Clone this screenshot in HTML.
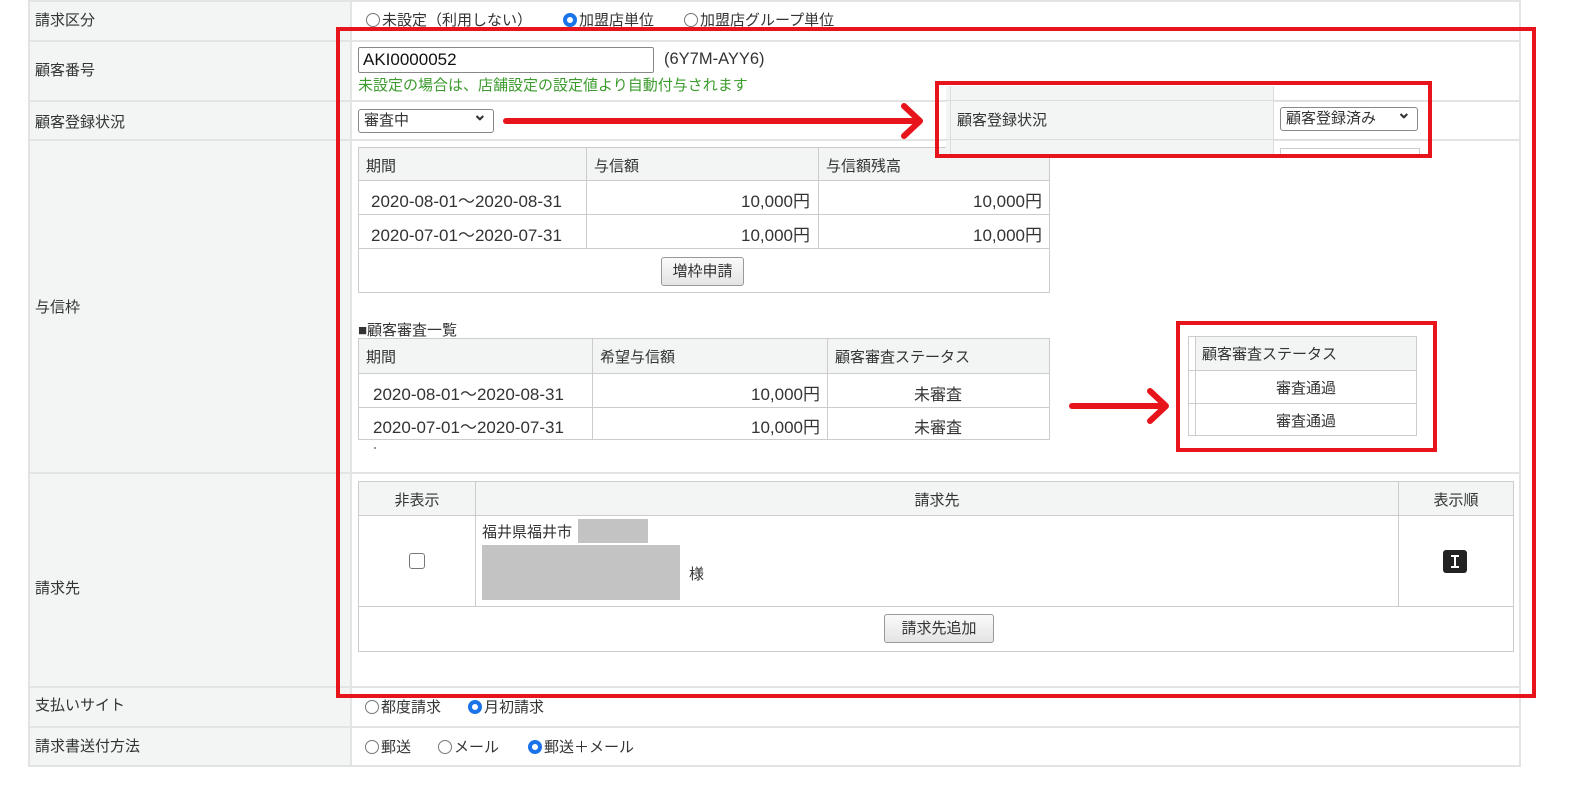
<!DOCTYPE html>
<html><head><meta charset="utf-8"><style>
*{box-sizing:border-box;margin:0;padding:0}
body{width:1590px;height:795px;background:#fff;position:relative;overflow:hidden;font-family:"Liberation Sans","Noto Sans CJK JP",sans-serif;font-size:15px;color:#333}
.a{position:absolute}
.n{font-size:17px}
.lab{background:#f3f4f4}
.hl{position:absolute;height:2px;background:#e2e3e3}
.vl{position:absolute;width:2px;background:#e2e3e3}
.red{position:absolute;border:4px solid #e8141c}
.tbl{position:absolute;border:1px solid #ccc}
.rad{display:inline-block;width:14px;height:14px;border:1px solid #777;border-radius:50%;vertical-align:-2px;margin-right:2px;background:#fff}
.rad.on{border:4px solid #1a73e8}
.btn{position:absolute;border:1px solid #999;border-radius:3px;background:linear-gradient(#fafafa,#e4e4e4);text-align:center;line-height:27px;font-size:15px}
.sel{position:absolute;border:1px solid #888;border-radius:3px;background:#fff;padding-left:5px;line-height:22px;font-size:15px}
.sel:after{content:"⌄";position:absolute;right:6px;top:-6px;font-weight:bold;font-size:17px}
</style></head><body>
<div class="a lab" style="left:28px;top:0;width:322px;height:767px"></div>
<div class="vl" style="left:350px;top:0;height:767px"></div>
<div class="vl" style="left:28px;top:0;height:767px"></div>
<div class="vl" style="left:1519px;top:0;height:767px"></div>
<div class="hl" style="left:28px;top:0;width:1493px"></div>
<div class="hl" style="left:28px;top:40px;width:1493px"></div>
<div class="hl" style="left:28px;top:100px;width:1493px"></div>
<div class="hl" style="left:28px;top:139px;width:1493px"></div>
<div class="hl" style="left:28px;top:472px;width:1493px"></div>
<div class="hl" style="left:28px;top:686px;width:1493px"></div>
<div class="hl" style="left:28px;top:726px;width:1493px"></div>
<div class="hl" style="left:28px;top:765px;width:1493px"></div>

<div class="a" style="left:35px;top:9px">請求区分</div>
<div class="a" style="left:35px;top:59px">顧客番号</div>
<div class="a" style="left:35px;top:111px">顧客登録状況</div>
<div class="a" style="left:35px;top:296px">与信枠</div>
<div class="a" style="left:35px;top:577px">請求先</div>
<div class="a" style="left:35px;top:694px">支払いサイト</div>
<div class="a" style="left:35px;top:735px">請求書送付方法</div>

<div class="a" style="left:366px;top:9px"><span class="rad"></span>未設定（利用しない）</div>
<div class="a" style="left:563px;top:9px"><span class="rad on"></span>加盟店単位</div>
<div class="a" style="left:684px;top:9px"><span class="rad"></span>加盟店グループ単位</div>

<div class="a" style="left:358px;top:47px;width:296px;height:26px;border:1px solid #888;border-radius:2px;padding-left:4px;line-height:24px;font-size:17px;color:#111">AKI0000052</div>
<div class="a" style="left:664px;top:50px;font-size:16.5px">(6Y7M-AYY6)</div>
<div class="a" style="left:358px;top:74px;color:#3b9b2c">未設定の場合は、店舗設定の設定値より自動付与されます</div>

<div class="sel" style="left:358px;top:109px;width:136px;height:24px">審査中</div>

<div class="tbl" style="left:358px;top:147px;width:692px;height:146px"></div>
<div class="a lab" style="left:359px;top:148px;width:690px;height:32px"></div>
<div class="hl" style="left:359px;top:180px;width:690px;height:1px;background:#ccc"></div>
<div class="hl" style="left:359px;top:214px;width:690px;height:1px;background:#ccc"></div>
<div class="hl" style="left:359px;top:248px;width:690px;height:1px;background:#ccc"></div>
<div class="vl" style="left:586px;top:148px;height:100px;width:1px;background:#ccc"></div>
<div class="vl" style="left:818px;top:148px;height:100px;width:1px;background:#ccc"></div>
<div class="a" style="left:366px;top:155px">期間</div>
<div class="a" style="left:594px;top:155px">与信額</div>
<div class="a" style="left:826px;top:155px">与信額残高</div>
<div class="a n" style="left:371px;top:187px">2020-08-01～2020-08-31</div>
<div class="a n" style="left:371px;top:221px">2020-07-01～2020-07-31</div>
<div class="a n" style="left:680px;top:187px;width:130px;text-align:right">10,000円</div>
<div class="a n" style="left:680px;top:221px;width:130px;text-align:right">10,000円</div>
<div class="a n" style="left:912px;top:187px;width:130px;text-align:right">10,000円</div>
<div class="a n" style="left:912px;top:221px;width:130px;text-align:right">10,000円</div>
<div class="btn" style="left:661px;top:257px;width:83px;height:29px">増枠申請</div>

<div class="a" style="left:358px;top:319px">■顧客審査一覧</div>
<div class="tbl" style="left:358px;top:338px;width:692px;height:102px"></div>
<div class="a lab" style="left:359px;top:339px;width:690px;height:34px"></div>
<div class="hl" style="left:359px;top:373px;width:690px;height:1px;background:#ccc"></div>
<div class="hl" style="left:359px;top:407px;width:690px;height:1px;background:#ccc"></div>
<div class="vl" style="left:592px;top:339px;height:100px;width:1px;background:#ccc"></div>
<div class="vl" style="left:827px;top:339px;height:100px;width:1px;background:#ccc"></div>
<div class="a" style="left:366px;top:346px">期間</div>
<div class="a" style="left:600px;top:346px">希望与信額</div>
<div class="a" style="left:835px;top:346px">顧客審査ステータス</div>
<div class="a n" style="left:373px;top:380px">2020-08-01～2020-08-31</div>
<div class="a n" style="left:373px;top:413px">2020-07-01～2020-07-31</div>
<div class="a n" style="left:690px;top:380px;width:130px;text-align:right">10,000円</div>
<div class="a n" style="left:690px;top:413px;width:130px;text-align:right">10,000円</div>
<div class="a" style="left:827px;top:381px;width:222px;text-align:center;font-size:16px">未審査</div>
<div class="a" style="left:827px;top:414px;width:222px;text-align:center;font-size:16px">未審査</div>
<div class="a" style="left:374px;top:447px;width:2px;height:2px;background:#999"></div>

<div class="tbl" style="left:358px;top:481px;width:1156px;height:171px"></div>
<div class="a lab" style="left:359px;top:482px;width:1154px;height:33px"></div>
<div class="hl" style="left:359px;top:515px;width:1154px;height:1px;background:#ccc"></div>
<div class="hl" style="left:359px;top:606px;width:1154px;height:1px;background:#ccc"></div>
<div class="vl" style="left:475px;top:482px;height:124px;width:1px;background:#ccc"></div>
<div class="vl" style="left:1398px;top:482px;height:124px;width:1px;background:#ccc"></div>
<div class="a" style="left:359px;top:489px;width:116px;text-align:center">非表示</div>
<div class="a" style="left:476px;top:489px;width:922px;text-align:center">請求先</div>
<div class="a" style="left:1399px;top:489px;width:114px;text-align:center">表示順</div>
<div class="a" style="left:409px;top:553px;width:16px;height:16px;border:1px solid #777;border-radius:3px"></div>
<div class="a" style="left:482px;top:521px">福井県福井市</div>
<div class="a" style="left:578px;top:519px;width:70px;height:24px;background:#c3c3c3"></div>
<div class="a" style="left:482px;top:545px;width:198px;height:55px;background:#c3c3c3"></div>
<div class="a" style="left:689px;top:563px">様</div>
<div class="a" style="left:1443px;top:550px;width:24px;height:23px;background:#222;border-radius:3px"><div class="a" style="left:11px;top:5px;width:2px;height:13px;background:#fff"></div><div class="a" style="left:8px;top:5px;width:8px;height:2px;background:#fff"></div><div class="a" style="left:8px;top:16px;width:8px;height:2px;background:#fff"></div></div>
<div class="btn" style="left:884px;top:614px;width:110px;height:29px">請求先追加</div>

<div class="a" style="left:365px;top:696px"><span class="rad"></span>都度請求</div>
<div class="a" style="left:468px;top:696px"><span class="rad on"></span>月初請求</div>
<div class="a" style="left:365px;top:736px"><span class="rad"></span>郵送</div>
<div class="a" style="left:438px;top:736px"><span class="rad"></span>メール</div>
<div class="a" style="left:528px;top:736px"><span class="rad on"></span>郵送＋メール</div>

<div class="a lab" style="left:946px;top:86px;width:327px;height:68px"></div>
<div class="a" style="left:946px;top:100px;width:480px;height:1px;background:#ddd"></div>
<div class="a" style="left:946px;top:139px;width:480px;height:1px;background:#ddd"></div>
<div class="a" style="left:1273px;top:86px;width:1px;height:68px;background:#ddd"></div>
<div class="a" style="left:950px;top:86px;width:1px;height:68px;background:#ddd"></div>
<div class="a" style="left:957px;top:109px">顧客登録状況</div>
<div class="sel" style="left:1280px;top:107px;width:138px;height:24px">顧客登録済み</div>
<div class="a" style="left:1280px;top:148px;width:140px;height:6px;border:1px solid #ccc;border-bottom:none"></div>

<div class="a" style="left:1188px;top:336px;width:229px;height:100px;border:1px solid #ccc"></div>
<div class="a lab" style="left:1196px;top:337px;width:220px;height:33px"></div>
<div class="a" style="left:1195px;top:336px;width:1px;height:100px;background:#ccc"></div>
<div class="a" style="left:1189px;top:370px;width:227px;height:1px;background:#ccc"></div>
<div class="a" style="left:1189px;top:403px;width:227px;height:1px;background:#ccc"></div>
<div class="a" style="left:1202px;top:343px">顧客審査ステータス</div>
<div class="a" style="left:1196px;top:377px;width:220px;text-align:center">審査通過</div>
<div class="a" style="left:1196px;top:410px;width:220px;text-align:center">審査通過</div>

<div class="red" style="left:336px;top:27px;width:1200px;height:671px"></div>
<div class="red" style="left:935px;top:81px;width:497px;height:77px"></div>
<div class="red" style="left:1176px;top:321px;width:261px;height:131px"></div>

<svg class="a" style="left:0;top:0" width="1590" height="795">
<g stroke="#e8141c" stroke-width="6" stroke-linecap="round" stroke-linejoin="round" fill="none">
<line x1="506" y1="121" x2="918" y2="121"/>
<polyline points="904,106 920,121 904,136"/>
<line x1="1072" y1="406" x2="1164" y2="406"/>
<polyline points="1150,391 1166,406 1150,421"/>
</g></svg>
</body></html>
